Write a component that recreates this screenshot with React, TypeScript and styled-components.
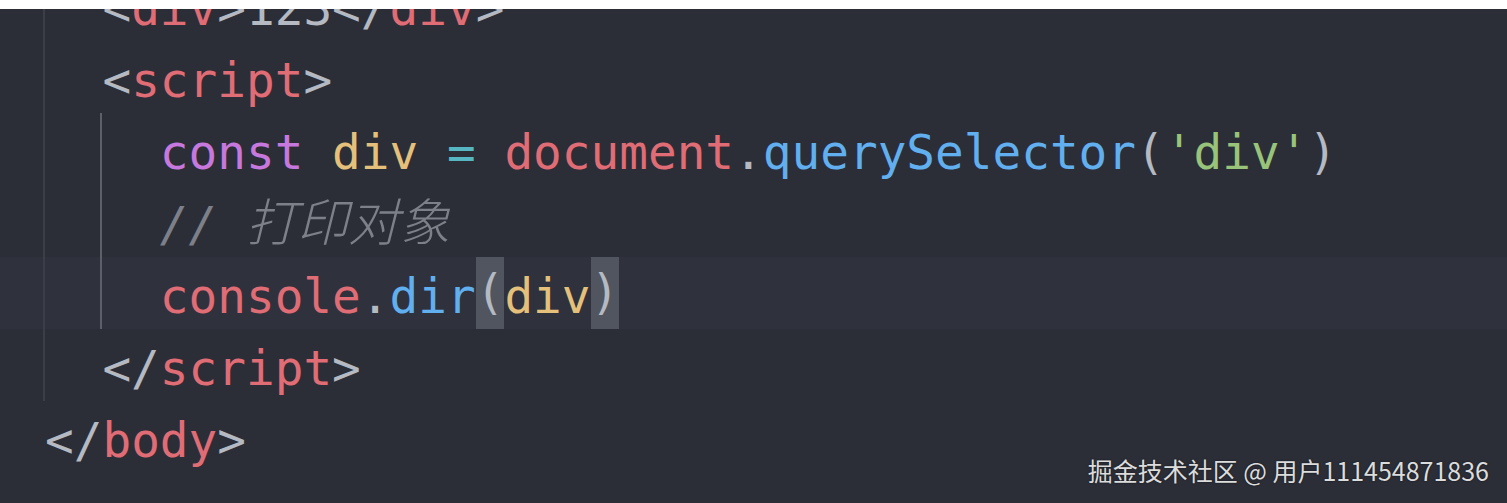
import React from 'react';
import styled, { createGlobalStyle } from 'styled-components';

const GlobalStyle = createGlobalStyle`
  html, body { margin: 0; padding: 0; background: #2b2e37; }
  #root { height: 503px; }
`;

const Page = styled.div`
  width: 1507px;
  height: 503px;
  display: flex;
  flex-direction: column;
  overflow: hidden;
`;

const TopStrip = styled.div`
  height: 9px;
  flex: none;
  background: #ffffff;
`;

const Editor = styled.div`
  flex: 1;
  position: relative;
  overflow: hidden;
  background: #2b2e37;
`;

const Code = styled.div`
  margin-top: -40px;
  font-family: 'DejaVu Sans Mono', 'Liberation Mono', monospace;
  font-size: 47.7px;
  color: #b4b9c2;
`;

const Line = styled.div<{ $active?: boolean }>`
  box-sizing: border-box;
  height: 72px;
  padding-top: 4px;
  line-height: 72px;
  padding-left: 45px;
  white-space: pre;
  background: ${(p) => (p.$active ? '#2f323c' : 'transparent')};
`;

const Indent = styled.span<{ $guide: 'dim' | 'active' }>`
  display: inline-block;
  vertical-align: top;
  width: 2ch;
  height: 72px;
  margin-top: -4px;
  margin-left: -2px;
  border-left: 2px solid ${(p) => (p.$guide === 'active' ? '#5c6069' : '#3b3e47')};
`;

const Tok = styled.span<{ $c: string; $italic?: boolean }>`
  color: ${(p) => p.$c};
  font-style: ${(p) => (p.$italic ? 'italic' : 'normal')};
`;

const Cjk = styled.span`
  font-family: 'Noto Sans CJK SC', sans-serif;
  font-size: 1.07em;
  line-height: 1;
  font-weight: 300;
  font-style: italic;
  color: #7d8089;
`;

const Match = styled.span`
  display: inline-block;
  vertical-align: top;
  height: 72px;
  margin-top: -4px;
  background: #51555f;
  color: #b4b9c2;
`;

const Watermark = styled.div`
  position: absolute;
  right: 18px;
  bottom: 15px;
  font-family: 'Noto Sans CJK SC', 'Noto Sans', sans-serif;
  font-size: 25px;
  color: #dcdcdc;
  text-shadow: 0 0 2px rgba(0, 0, 0, 0.6);
  white-space: pre;
`;

const C = {
  punc: '#b4b9c2',
  tag: '#e06c75',
  kw: '#c678dd',
  vari: '#e5c07b',
  op: '#56b6c2',
  fn: '#61afef',
  str: '#98c379',
  cmt: '#7d8089',
};

export default function App() {
  return (
    <>
      <GlobalStyle />
      <Page>
        <TopStrip />
        <Editor>
          <Code>
            <Line>
              <Indent $guide="dim" />
              <Tok $c={C.punc}>&lt;</Tok>
              <Tok $c={C.tag}>div</Tok>
              <Tok $c={C.punc}>&gt;123&lt;/</Tok>
              <Tok $c={C.tag}>div</Tok>
              <Tok $c={C.punc}>&gt;</Tok>
            </Line>
            <Line>
              <Indent $guide="dim" />
              <Tok $c={C.punc}>&lt;</Tok>
              <Tok $c={C.tag}>script</Tok>
              <Tok $c={C.punc}>&gt;</Tok>
            </Line>
            <Line>
              <Indent $guide="dim" />
              <Indent $guide="active" />
              <Tok $c={C.kw}>const</Tok> <Tok $c={C.vari}>div</Tok> <Tok $c={C.op}>=</Tok>{' '}
              <Tok $c={C.tag}>document</Tok>
              <Tok $c={C.punc}>.</Tok>
              <Tok $c={C.fn}>querySelector</Tok>
              <Tok $c={C.punc}>(</Tok>
              <Tok $c={C.str}>'div'</Tok>
              <Tok $c={C.punc}>)</Tok>
            </Line>
            <Line>
              <Indent $guide="dim" />
              <Indent $guide="active" />
              <Tok $c={C.cmt} $italic>
                //{' '}
              </Tok>
              <Cjk>打印对象</Cjk>
            </Line>
            <Line $active>
              <Indent $guide="dim" />
              <Indent $guide="active" />
              <Tok $c={C.tag}>console</Tok>
              <Tok $c={C.punc}>.</Tok>
              <Tok $c={C.fn}>dir</Tok>
              <Match>(</Match>
              <Tok $c={C.vari}>div</Tok>
              <Match>)</Match>
            </Line>
            <Line>
              <Indent $guide="dim" />
              <Tok $c={C.punc}>&lt;/</Tok>
              <Tok $c={C.tag}>script</Tok>
              <Tok $c={C.punc}>&gt;</Tok>
            </Line>
            <Line>
              <Tok $c={C.punc}>&lt;/</Tok>
              <Tok $c={C.tag}>body</Tok>
              <Tok $c={C.punc}>&gt;</Tok>
            </Line>
          </Code>
          <Watermark>掘金技术社区 @ 用户111454871836</Watermark>
        </Editor>
      </Page>
    </>
  );
}
